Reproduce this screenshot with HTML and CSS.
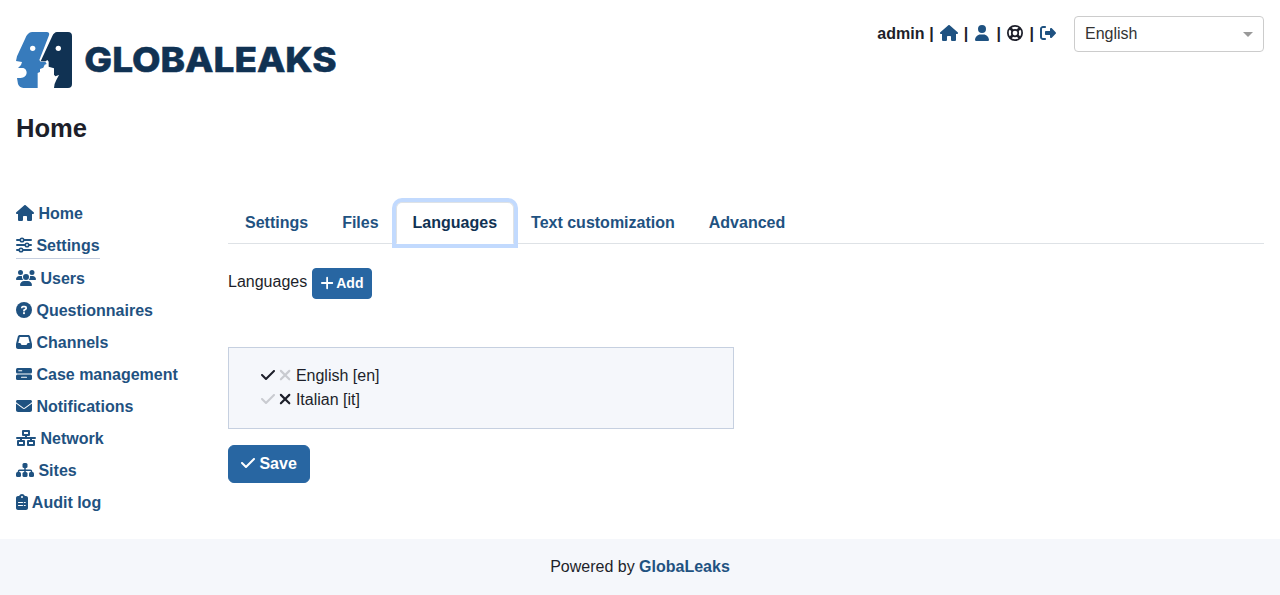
FILE: index.html
```html
<!DOCTYPE html>
<html lang="en">
<head>
<meta charset="utf-8">
<title>GlobaLeaks</title>
<link rel="stylesheet" href="styles.css">
</head>
<body>
<svg class="sprite" aria-hidden="true">
  <symbol id="house" viewBox="0 0 576 512"><path d="M575.8 255.5c0 18-15 32.1-32 32.1h-32l.7 160.2c0 2.7-.2 5.4-.5 8.1V472c0 22.1-17.9 40-40 40H456c-1.1 0-2.2 0-3.3-.1c-1.4 .1-2.8 .1-4.2 .1H416 392c-22.1 0-40-17.9-40-40V448 384c0-17.7-14.3-32-32-32H256c-17.7 0-32 14.3-32 32v64 24c0 22.1-17.9 40-40 40H160 128.1c-1.5 0-3-.1-4.5-.2c-1.2 .1-2.4 .2-3.6 .2H104c-22.1 0-40-17.9-40-40V360c0-.9 0-1.9 .1-2.8V287.6H32c-18 0-32-14-32-32.1c0-9 3-17 10-24L266.4 8c7-7 15-8 22-8s15 2 21 7L564.8 231.5c8 7 12 15 11 24z"/></symbol>
  <symbol id="user" viewBox="0 0 448 512"><path d="M224 256A128 128 0 1 0 224 0a128 128 0 1 0 0 256zm-45.7 48C79.8 304 0 383.8 0 482.3C0 498.7 13.3 512 29.7 512H418.3c16.4 0 29.7-13.3 29.7-29.7C448 383.8 368.2 304 269.7 304H178.3z"/></symbol>
  <symbol id="ring" viewBox="0 0 512 512"><g fill="none" stroke="currentColor" stroke-width="56"><circle cx="256" cy="256" r="228"/><circle cx="256" cy="256" r="104"/><path stroke-width="84" d="M96 96l88 88M416 96l-88 88M96 416l88-88M416 416l-88-88"/></g></symbol>
  <symbol id="logout" viewBox="0 0 512 512"><path d="M377.9 105.9L500.7 228.7c7.2 7.2 11.3 17.1 11.3 27.3s-4.1 20.1-11.3 27.3L377.9 406.1c-6.4 6.4-15 9.9-24 9.9c-18.7 0-33.9-15.2-33.9-33.9l0-62.1-128 0c-17.7 0-32-14.3-32-32l0-64c0-17.7 14.3-32 32-32l128 0 0-62.1c0-18.7 15.2-33.9 33.9-33.9c9 0 17.6 3.6 24 9.9zM160 96L96 96c-17.7 0-32 14.3-32 32l0 256c0 17.7 14.3 32 32 32l64 0c17.7 0 32 14.3 32 32s-14.3 32-32 32l-64 0c-53 0-96-43-96-96L0 128C0 75 43 32 96 32l64 0c17.7 0 32 14.3 32 32s-14.3 32-32 32z"/></symbol>
  <symbol id="sliders" viewBox="0 0 512 512"><g fill="none" stroke="currentColor" stroke-width="64" stroke-linecap="round"><path d="M32 96h90M262 96h218M32 256h250M422 256h58M32 416h58M230 416h250"/></g><g fill="none" stroke="currentColor" stroke-width="52"><circle cx="192" cy="96" r="56"/><circle cx="352" cy="256" r="56"/><circle cx="160" cy="416" r="56"/></g></symbol>
  <symbol id="users" viewBox="0 0 640 512"><path d="M144 0a80 80 0 1 1 0 160A80 80 0 1 1 144 0zM512 0a80 80 0 1 1 0 160A80 80 0 1 1 512 0zM0 298.7C0 239.8 47.8 192 106.7 192h42.7c15.9 0 31 3.5 44.6 9.7c-1.3 7.2-1.9 14.7-1.9 22.3c0 38.2 16.8 72.5 43.3 96H21.3C9.6 320 0 310.4 0 298.7zM405.3 320h-.7c26.6-23.5 43.3-57.8 43.3-96c0-7.6-.7-15-1.9-22.3c13.6-6.3 28.7-9.7 44.6-9.7h42.7C592.2 192 640 239.8 640 298.7c0 11.8-9.6 21.3-21.3 21.3H405.3zM224 224a96 96 0 1 1 192 0 96 96 0 1 1-192 0zM128 485.3C128 411.7 187.7 352 261.3 352H378.7C452.3 352 512 411.7 512 485.3c0 14.7-11.9 26.7-26.7 26.7H154.7c-14.7 0-26.7-11.9-26.7-26.7z"/></symbol>
  <symbol id="question" viewBox="0 0 512 512"><circle cx="256" cy="256" r="256"/><path d="M187 176c8-18 20-26 42-26h52c28 0 46 18 46 43 0 19-9 31-25 41l-46 27v18" fill="none" stroke="#fff" stroke-width="54" stroke-linecap="round"/><circle cx="256" cy="356" r="33" fill="#fff"/></symbol>
  <symbol id="inbox" viewBox="0 0 512 512"><path d="M121 32C91.6 32 66 52 58.9 80.5L1.9 308.4C.6 313.5 0 318.7 0 323.9V416c0 35.3 28.7 64 64 64H448c35.3 0 64-28.7 64-64V323.9c0-5.2-.6-10.4-1.9-15.5l-57-227.9C446 52 420.4 32 391 32H121zm0 64H391l48 192H387.8c-12.1 0-23.2 6.8-28.6 17.7l-14.3 28.6c-5.4 10.8-16.5 17.7-28.6 17.7H195.8c-12.1 0-23.2-6.8-28.6-17.7l-14.3-28.6c-5.4-10.8-16.5-17.7-28.6-17.7H73L121 96z"/></symbol>
  <symbol id="bars" viewBox="0 0 512 512"><rect y="64" width="512" height="176" rx="48"/><rect y="272" width="512" height="176" rx="48"/><path d="M88 152h96M176 360h160" stroke="#fff" stroke-width="34" stroke-linecap="round"/></symbol>
  <symbol id="envelope" viewBox="0 0 512 512"><path d="M48 64C21.5 64 0 85.5 0 112c0 15.1 7.1 29.3 19.2 38.4L236.8 313.6c11.4 8.5 27 8.5 38.4 0L492.8 150.4c12.1-9.1 19.2-23.3 19.2-38.4c0-26.5-21.5-48-48-48H48zM0 176V384c0 35.3 28.7 64 64 64H448c35.3 0 64-28.7 64-64V176L294.4 339.2c-22.8 17.1-54 17.1-76.8 0L0 176z"/></symbol>
  <symbol id="network" viewBox="0 0 640 512"><g fill="none" stroke="currentColor" stroke-width="64" stroke-linejoin="round"><rect x="224" y="32" width="192" height="128"/><rect x="64" y="352" width="192" height="128"/><rect x="384" y="352" width="192" height="128"/><path d="M32 256h576M320 160v96M160 256v96M480 256v96" stroke-linecap="round"/></g></symbol>
  <symbol id="sitemap" viewBox="0 0 576 512"><rect x="208" y="32" width="160" height="160" rx="48"/><rect y="320" width="160" height="160" rx="48"/><rect x="208" y="320" width="160" height="160" rx="48"/><rect x="416" y="320" width="160" height="160" rx="48"/><path d="M288 140v200M80 340v-44q0-32 32-32h352q32 0 32 32v44" fill="none" stroke="currentColor" stroke-width="48"/></symbol>
  <symbol id="clipboard" viewBox="0 0 384 512"><path d="M192 0c-41.8 0-77.4 26.7-90.5 64H64C28.7 64 0 92.7 0 128V448c0 35.3 28.7 64 64 64H320c35.3 0 64-28.7 64-64V128c0-35.3-28.7-64-64-64H282.5C269.4 26.7 233.8 0 192 0z"/><circle cx="192" cy="96" r="32" fill="#fff"/><path d="M80 272h128M264 272h32M80 368h128M264 368h32" stroke="#fff" stroke-width="34" stroke-linecap="round"/></symbol>
  <symbol id="check" viewBox="0 0 448 512"><path d="M438.6 105.4c12.5 12.5 12.5 32.8 0 45.3l-256 256c-12.5 12.5-32.8 12.5-45.3 0l-128-128c-12.5-12.5-12.5-32.8 0-45.3s32.8-12.5 45.3 0L160 338.7 393.4 105.4c12.5-12.5 32.8-12.5 45.3 0z"/></symbol>
  <symbol id="xmark" viewBox="0 0 384 512"><path d="M60 124l270 270M330 124L60 394" stroke="currentColor" stroke-width="68" stroke-linecap="round"/></symbol>
  <symbol id="plus" viewBox="0 0 448 512"><path d="M224 64v384M32 256h384" stroke="currentColor" stroke-width="66" stroke-linecap="round"/></symbol>
</svg>

<header class="header">
  <div class="brand">
    <svg class="logo" viewBox="24 24 960 168" role="img" aria-label="GlobaLeaks">
      <path fill="#377bbc" d="M72 24H116q10 1 7 10L94 108l4 5h14l4 7-6 2-4 9-10 4v9l-7 3v45H46q-12-1-16-12l-3-18h11q16-1 18-15 0-12-10-15H30l9-9 3-9-18-3 3-14 24-52Q58 25 72 24z"/>
      <path fill="#103253" d="M147 24h33q12 0 12 12v144q0 12-12 12h-42q1-14 7-24l8-15-11 4-4-5v-19l-16-5v-15l-4-5-5 4H98l35-76Q138 25 147 24z"/>
      <circle cx="74" cy="73" r="8" fill="#fff"/><circle cx="151" cy="73" r="8" fill="#fff"/>
      <text class="logo-text" x="229" y="145" textLength="757" lengthAdjust="spacingAndGlyphs">GLOBALEAKS</text>
    </svg>
    <h1 class="title">Home</h1>
  </div>
  <div class="tools">
    <div class="session">
      <span class="name">admin</span><span>|</span>
      <a href="#"><svg class="icon w18"><use href="#house"/></svg></a><span>|</span>
      <a href="#" class="account"><svg class="icon w14"><use href="#user"/></svg></a><span>|</span>
      <svg class="icon w16 help"><use href="#ring"/></svg><span>|</span>
      <a href="#"><svg class="icon w16"><use href="#logout"/></svg></a>
    </div>
    <div class="select"><span>English</span><span class="caret"></span></div>
  </div>
</header>

<div class="body">
  <nav class="sidebar">
    <a href="#"><svg class="icon w18"><use href="#house"/></svg> Home</a>
    <a href="#" class="current"><svg class="icon w16"><use href="#sliders"/></svg> Settings</a>
    <a href="#"><svg class="icon w20"><use href="#users"/></svg> Users</a>
    <a href="#"><svg class="icon w16"><use href="#question"/></svg> Questionnaires</a>
    <a href="#"><svg class="icon w16"><use href="#inbox"/></svg> Channels</a>
    <a href="#"><svg class="icon w16"><use href="#bars"/></svg> Case management</a>
    <a href="#"><svg class="icon w16"><use href="#envelope"/></svg> Notifications</a>
    <a href="#"><svg class="icon w20"><use href="#network"/></svg> Network</a>
    <a href="#"><svg class="icon w18"><use href="#sitemap"/></svg> Sites</a>
    <a href="#"><svg class="icon w12"><use href="#clipboard"/></svg> Audit log</a>
  </nav>
  <main class="main">
    <div class="tabs">
      <a href="#" class="tab">Settings</a>
      <a href="#" class="tab">Files</a>
      <a href="#" class="tab active">Languages</a>
      <a href="#" class="tab">Text customization</a>
      <a href="#" class="tab">Advanced</a>
    </div>
    <div class="add-row"><span>Languages</span><button class="btn small"><svg class="icon plus"><use href="#plus"/></svg> Add</button></div>
    <div class="list">
      <div><svg class="icon w14"><use href="#check"/></svg> <svg class="icon w12 dim"><use href="#xmark"/></svg> English [en]</div>
      <div><svg class="icon w14 dim"><use href="#check"/></svg> <svg class="icon w12"><use href="#xmark"/></svg> Italian [it]</div>
    </div>
    <button class="btn"><svg class="icon w14"><use href="#check"/></svg> Save</button>
  </main>
</div>

<footer class="footer">Powered by&nbsp;<a href="#">GlobaLeaks</a></footer>
</body>
</html>
```

FILE: styles.css
```css
* { box-sizing: border-box; }
body {
  margin: 0;
  height: 595px;
  display: flex;
  flex-direction: column;
  font: 16px/24px "Liberation Sans", Arial, sans-serif;
  color: #1d1f2a;
  background: #fff;
}
a { color: #1f5281; font-weight: 700; text-decoration: none; }
.sprite { display: none; }
.icon { height: 16px; fill: currentColor; vertical-align: -2px; overflow: visible; }
.w12 { width: 12px; }
.w14 { width: 14px; }
.w16 { width: 16px; }
.w18 { width: 18px; }
.w20 { width: 20px; }
.dim { opacity: .2; }

.header { display: flex; justify-content: space-between; padding: 16px 16px 0; height: 198px; }
.brand { padding-top: 16px; }
.logo { display: block; width: 320px; height: 56px; }
.logo-text { font: 800 103px Inter, sans-serif; fill: #103253; stroke: #103253; stroke-width: 1.5px; }
.title { margin: 25px 0 0; font-size: 25.6px; line-height: 31px; }
.tools { display: flex; gap: 18px; align-items: flex-start; }
.session { display: flex; gap: 6px; padding-top: 6px; font-weight: 700; }
.session .icon { display: block; margin-top: 3px; }
.name { margin-right: -1.3px; }
.account { padding: 0 1.2px 0 1.2px; }
.help { margin: 0 .5px 0 0; }
.select {
  display: flex;
  justify-content: space-between;
  align-items: center;
  width: 190px;
  height: 36px;
  padding: 0 10px;
  border: 1px solid #ccc;
  border-radius: 4px;
  color: #333;
}
.caret { border: 5px solid transparent; border-top-color: #999; border-bottom: 0; margin-top: 1px; }

.body { display: flex; flex: 1; padding: 0 16px; }
.sidebar { display: flex; flex-direction: column; align-items: flex-start; gap: 8px; width: 212px; padding-top: 4px; }
.current { border-bottom: 1px solid #c6cfe0; }
.main { flex: 1; padding-top: 4px; }
.tabs { display: flex; border-bottom: 1px solid #dee2e6; }
.tab { padding: 8px 16px; border: 1px solid transparent; margin-bottom: -1px; }
.active {
  color: #103253;
  background: #fff;
  border-color: #dee2e6 #dee2e6 #fff;
  border-radius: 6px 6px 0 0;
  box-shadow: 0 0 0 4px #c2dafe;
}
.add-row { display: flex; align-items: flex-start; gap: 4.45px; margin-top: 24px; height: 31px; }
.add-row span { padding-top: 2px; }
.btn {
  padding: 6px 12px;
  border: 1px solid #2866a2;
  border-radius: 6px;
  background: #2866a2;
  color: #fff;
  font: 700 16px/24px "Liberation Sans", Arial, sans-serif;
}
.small { padding: 4px 8px; border-radius: 4px; font-size: 14px; line-height: 21px; }
.plus { width: 12.25px; height: 14px; }
.list { width: 506px; height: 82px; margin: 48px 0 16px; padding: 16px 32px; border: 1px solid #c6d0e0; background: #f5f7fb; }
.footer { display: flex; justify-content: center; align-items: center; height: 56px; background: #f5f7fb; }
```
